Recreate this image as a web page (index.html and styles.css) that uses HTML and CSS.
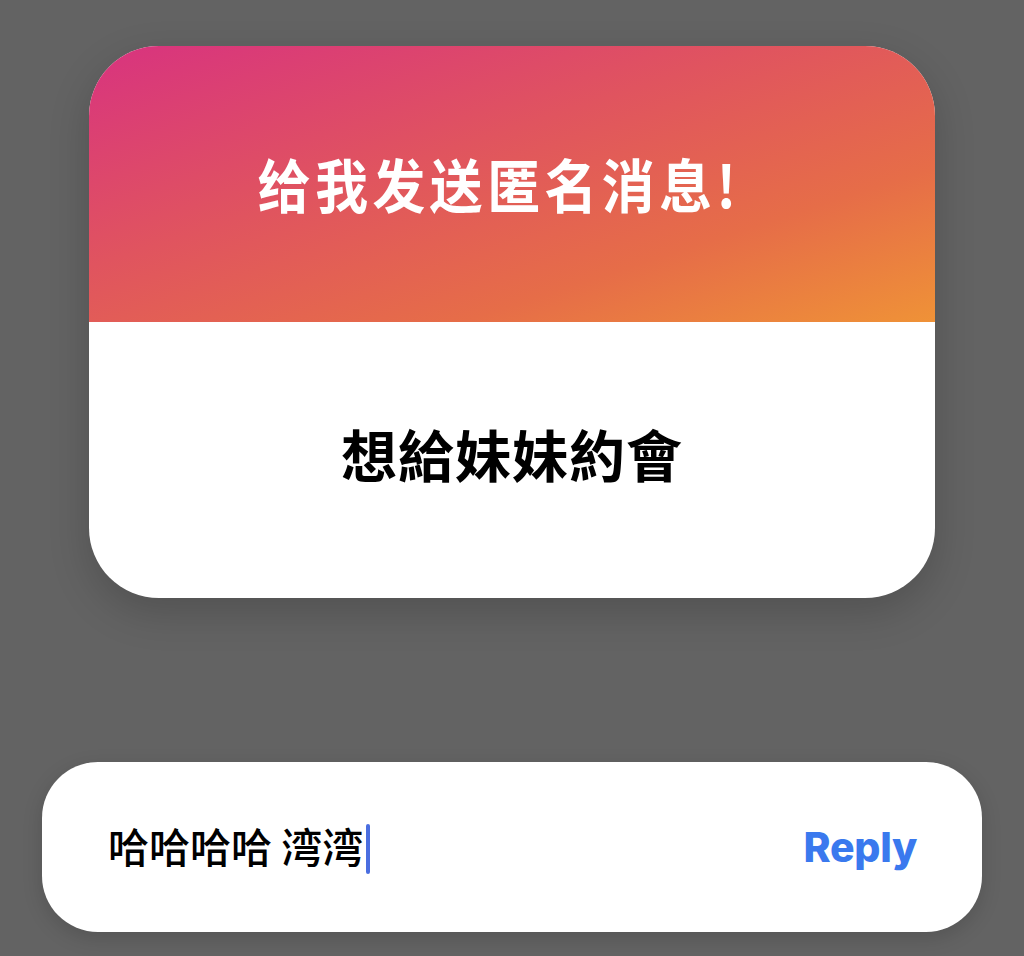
FILE: index.html
```html
<!DOCTYPE html>
<html lang="zh">

<head>
  <meta charset="UTF-8">
  <meta name="viewport" content="width=device-width, initial-scale=1.0">
  <title>匿名消息</title>
  <link rel="stylesheet" href="styles.css">
</head>

<body>
  <div class="page">
    <div class="card">
      <div class="card-header">
        <h1 class="title">给我发送匿名消息!</h1>
      </div>
      <div class="card-body">
        <p class="message">想給妹妹約會</p>
      </div>
    </div>

    <div class="reply-bar">
      <div class="input">哈哈哈哈 湾湾<span class="caret"></span></div>
      <button class="reply">Reply</button>
    </div>
  </div>
</body>

</html>
```

FILE: styles.css
```css
html,
body {
  margin: 0;
  padding: 0;
}

body {
  background-color: #636363;
  font-family: "Noto Sans CJK SC", "Noto Sans", sans-serif;
}

.page {
  width: 1024px;
  height: 956px;
  padding-top: 46px;
  box-sizing: border-box;
  display: flex;
  flex-direction: column;
}

.card {
  width: 846px;
  margin-left: 89px;
  border-radius: 70px;
  overflow: hidden;
  background-color: #fff;
  box-shadow: 0 14px 40px rgba(0, 0, 0, 0.18);
}

.card-header {
  height: 276px;
  display: flex;
  justify-content: center;
  align-items: center;
  background: linear-gradient(to bottom right, #d8337f 0%, #e0545f 40%, #e66d48 72%, #ef9237 100%);
}

.title {
  margin: 0 26px 2px 0;
  color: #fff;
  font-size: 58px;
  font-weight: 700;
  letter-spacing: 5px;
  transform: scaleX(0.91);
}

.card-body {
  height: 276px;
  display: flex;
  justify-content: center;
  align-items: center;
}

.message {
  margin: 0 0 16px 0;
  color: #000;
  font-family: "Noto Sans CJK TC", "Noto Sans", sans-serif;
  font-size: 56px;
  font-weight: 700;
  letter-spacing: 1px;
}

.reply-bar {
  width: 940px;
  height: 170px;
  margin-top: 164px;
  margin-left: 42px;
  border-radius: 56px;
  background-color: #fff;
  box-shadow: 0 6px 20px rgba(0, 0, 0, 0.15);
  display: flex;
  align-items: center;
  padding: 0 65px 0 66px;
  box-sizing: border-box;
}

.input {
  flex: 1;
  display: flex;
  align-items: center;
  color: #000;
  font-size: 41px;
  font-weight: 500;
  line-height: 1;
  margin-top: -4px;
}

.caret {
  display: inline-block;
  width: 4px;
  height: 50px;
  margin-left: 3px;
  margin-top: 8px;
  border-radius: 2px;
  background-color: #4a6ee0;
}

.reply {
  border: none;
  background: transparent;
  padding: 0;
  color: #3a79ee;
  font-family: Inter, "Liberation Sans", sans-serif;
  font-size: 41px;
  font-weight: 800;
  letter-spacing: -0.3px;
  cursor: pointer;
}
```
